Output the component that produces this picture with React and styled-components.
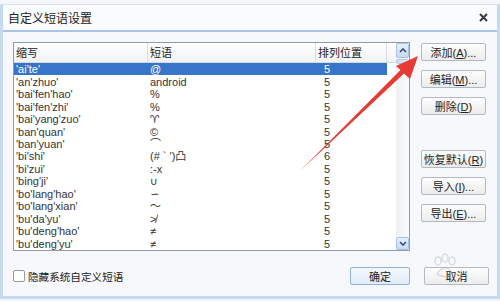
import styled, { createGlobalStyle } from "styled-components";

const GlobalStyle = createGlobalStyle`
  html, body {
    margin: 0;
    padding: 0;
    overflow: hidden;
  }
  body {
    font-family: "Liberation Sans", "Noto Sans CJK SC", sans-serif;
    color: #222;
  }
`;

const rows = [
  ["'ai'te'", "@", 5],
  ["'an'zhuo'", "android", 5],
  ["'bai'fen'hao'", "%", 5],
  ["'bai'fen'zhi'", "%", 5],
  ["'bai'yang'zuo'", "\u2648\uFE0E", 5],
  ["'ban'quan'", "©", 5],
  ["'ban'yuan'", "⌒", 5],
  ["'bi'shi'", "(# ` ')凸", 6],
  ["'bi'zui'", ":-x", 5],
  ["'bing'ji'", "∪", 5],
  ["'bo'lang'hao'", "∽", 5],
  ["'bo'lang'xian'", "～", 5],
  ["'bu'da'yu'", "≯", 5],
  ["'bu'deng'hao'", "≠", 5],
  ["'bu'deng'yu'", "≠", 5],
];

const columns = [
  { title: "缩写", width: 134 },
  { title: "短语", width: 168 },
  { title: "排列位置", width: 71 },
];

const Page = styled.div`
  position: relative;
  width: 500px;
  height: 301px;
  display: flex;
  flex-direction: column;
  background: #eef2f6;
`;

const BackStrip = styled.div`
  height: 5px;
  background: #f4f6f9;
  border-bottom: 1px solid #d7e2ee;
  box-sizing: border-box;
`;

const Window = styled.div`
  height: 294px;
  display: flex;
  flex-direction: column;
  border: 3px solid #c7d9ee;
  border-top: none;
  box-sizing: border-box;
`;

const TitleBar = styled.div`
  height: 25px;
  display: flex;
  align-items: center;
  justify-content: space-between;
  padding: 0 9px 0 5px;
  background: #fafbfd;
  border-bottom: 2px solid #a9c4e4;
  font-size: 12px;
  color: #222;
`;

const Close = styled.svg`
  width: 9px;
  height: 9px;
`;

const Body = styled.div`
  flex: 1;
  display: flex;
  flex-direction: column;
  padding: 10px 8px 0 10px;
  background: #f6f8fb;
`;

const Main = styled.div`
  display: flex;
  gap: 11px;
  height: 209px;
`;

const ListBox = styled.div`
  width: 397px;
  display: flex;
  border: 1px solid #8e9cb2;
  background: #fff;
  box-sizing: border-box;
`;

const TableArea = styled.div`
  flex: 1;
  display: flex;
  flex-direction: column;
`;

const Header = styled.div`
  height: 20px;
  display: flex;
  background: linear-gradient(#ffffff, #f1f3f5);
  border-bottom: 1px solid #d6d9de;
  box-sizing: border-box;
`;

const HeaderCell = styled.div`
  width: ${(p) => p.$w}px;
  display: flex;
  align-items: center;
  padding-left: 2px;
  border-right: 1px solid #dadde2;
  box-sizing: border-box;
  font-size: 11px;
  color: #222;
`;

const Row = styled.div`
  height: 12.5px;
  display: flex;
  align-items: center;
  font-size: 11px;
  line-height: 12px;
  color: ${(p) => (p.$selected ? "#fff" : "#333")};
`;

const Cell = styled.div`
  width: ${(p) => p.$w}px;
  height: 100%;
  display: flex;
  align-items: center;
  padding-left: ${(p) => p.$pad}px;
  box-sizing: border-box;
  white-space: nowrap;
  overflow: hidden;
  font-family: "Liberation Sans", "DejaVu Sans", "Noto Sans CJK SC", sans-serif;
  background: ${(p) => (p.$selected ? "#3875c8" : "transparent")};
`;

const ScrollBar = styled.div`
  width: 13px;
  display: flex;
  flex-direction: column;
  background: linear-gradient(90deg, #eef1f5, #f8f9fb);
`;

const ScrollButton = styled.div`
  height: ${(p) => p.$h}px;
  display: flex;
  align-items: center;
  justify-content: center;
  background: linear-gradient(#e9f0fa, #c7d8f1);
  border: 1px solid #a9c0e2;
  border-radius: 2px;
  box-sizing: border-box;
`;

const Thumb = styled.div`
  height: 5px;
  margin-top: 1px;
  background: linear-gradient(90deg, #cfdcf0, #dfe8f6);
  border: 1px solid #b8cbe8;
  border-radius: 2px;
  box-sizing: border-box;
`;

const Track = styled.div`
  flex: 1;
`;

const Side = styled.div`
  display: flex;
  flex-direction: column;
  gap: 9px;
  padding-top: 1px;
`;

const Button = styled.div`
  width: ${(p) => p.$w || 65}px;
  height: 18px;
  margin-top: ${(p) => p.$gapTop || 0}px;
  display: flex;
  align-items: center;
  justify-content: center;
  background: ${(p) =>
    p.$default
      ? "linear-gradient(#f4f8fe, #e2ebf8)"
      : "linear-gradient(#fdfdfd, #ececec)"};
  border: 1px solid ${(p) => (p.$default ? "#8fb1e2" : "#b4b8bf")};
  border-radius: 2px;
  box-sizing: border-box;
  font-size: 11px;
  color: #222;
  white-space: nowrap;

  u {
    text-decoration: underline;
  }
`;

const Footer = styled.div`
  display: flex;
  align-items: center;
  padding-top: 16px;
  height: 18px;
`;

const CheckLabel = styled.label`
  display: flex;
  align-items: center;
  gap: 3px;
  font-size: 10.6px;
  color: #222;
  margin-right: auto;
`;

const CheckBox = styled.span`
  width: 12px;
  height: 12px;
  background: #fff;
  border: 1px solid #929aa6;
  border-radius: 2px;
  box-sizing: border-box;
`;

const FooterButtons = styled.div`
  display: flex;
  gap: 14px;
`;

const Paw = styled.svg`
  position: absolute;
  left: 430px;
  top: 252px;
  width: 30px;
  height: 30px;
  pointer-events: none;
`;

const Arrow = styled.svg`
  position: absolute;
  left: 0;
  top: 0;
  width: 500px;
  height: 301px;
  pointer-events: none;
`;

const Chevron = ({ up }) => (
  <svg width="8" height="5" viewBox="0 0 8 5">
    <path
      d={up ? "M1 4 L4 1 L7 4" : "M1 1 L4 4 L7 1"}
      fill="none"
      stroke="#2f4f86"
      strokeWidth="1.6"
    />
  </svg>
);

const Label = ({ text, mn, tail = "" }) => (
  <span>
    {text}(<u>{mn}</u>){tail}
  </span>
);

export default function App() {
  return (
    <Page>
      <GlobalStyle />
      <BackStrip />
      <Window>
        <TitleBar>
          <span>自定义短语设置</span>
          <Close viewBox="0 0 9 9">
            <path d="M1 1 L8 8 M8 1 L1 8" stroke="#3a3a3a" strokeWidth="2" />
          </Close>
        </TitleBar>
        <Body>
          <Main>
            <ListBox>
              <TableArea>
                <Header>
                  {columns.map((c) => (
                    <HeaderCell key={c.title} $w={c.width}>
                      {c.title}
                    </HeaderCell>
                  ))}
                </Header>
                {rows.map(([abbr, phrase, pos], i) => (
                  <Row key={abbr} $selected={i === 0}>
                    <Cell $w={134} $pad={2} $selected={i === 0}>
                      {abbr}
                    </Cell>
                    <Cell $w={168} $pad={2} $selected={i === 0}>
                      {phrase}
                    </Cell>
                    <Cell $w={71} $pad={8} $selected={i === 0}>
                      {pos}
                    </Cell>
                  </Row>
                ))}
              </TableArea>
              <ScrollBar>
                <ScrollButton $h={15}>
                  <Chevron up />
                </ScrollButton>
                <Thumb />
                <Track />
                <ScrollButton $h={13}>
                  <Chevron />
                </ScrollButton>
              </ScrollBar>
            </ListBox>
            <Side>
              <Button>
                <Label text="添加" mn="A" tail="..." />
              </Button>
              <Button>
                <Label text="编辑" mn="M" tail="..." />
              </Button>
              <Button>
                <Label text="删除" mn="D" />
              </Button>
              <Button $gapTop={26}>
                <Label text="恢复默认" mn="R" />
              </Button>
              <Button>
                <Label text="导入" mn="I" tail="..." />
              </Button>
              <Button>
                <Label text="导出" mn="E" tail="..." />
              </Button>
            </Side>
          </Main>
          <Footer>
            <CheckLabel>
              <CheckBox />
              隐藏系统自定义短语
            </CheckLabel>
            <FooterButtons>
              <Button $w={60} $default>
                确定
              </Button>
              <Button>取消</Button>
            </FooterButtons>
          </Footer>
        </Body>
      </Window>
      <Paw viewBox="0 0 30 30">
        <g fill="none" stroke="rgba(170,170,170,0.35)" strokeWidth="1.5">
          <ellipse cx="8" cy="9" rx="3" ry="4" />
          <ellipse cx="15" cy="6" rx="3" ry="4" />
          <ellipse cx="22" cy="9" rx="3" ry="4" />
          <path d="M7 22 Q15 10 23 22 Q15 27 7 22 Z" />
        </g>
      </Paw>
      <Arrow viewBox="0 0 500 301">
        <polygon
          points="300,171 400.5,70 396,66 418,56 410,79 404,73.5"
          fill="#e83a34"
        />
      </Arrow>
    </Page>
  );
}
